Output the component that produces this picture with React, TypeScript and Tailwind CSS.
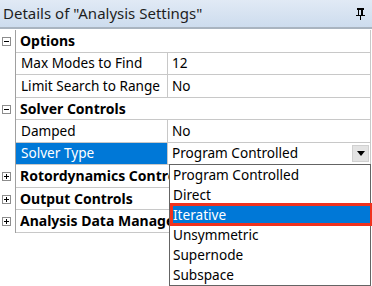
import React from 'react';

type Row =
  | { kind: 'group'; label: string; open: boolean; h: string }
  | { kind: 'prop'; label: string; value: string; h: string; selected?: boolean };

const rows: Row[] = [
  { kind: 'group', label: 'Options', open: true, h: 'h-[23px]' },
  { kind: 'prop', label: 'Max Modes to Find', value: '12', h: 'h-[22px]' },
  { kind: 'prop', label: 'Limit Search to Range', value: 'No', h: 'h-[23px]' },
  { kind: 'group', label: 'Solver Controls', open: true, h: 'h-[22px]' },
  { kind: 'prop', label: 'Damped', value: 'No', h: 'h-[23px]' },
  { kind: 'prop', label: 'Solver Type', value: 'Program Controlled', h: 'h-[22px]', selected: true },
  { kind: 'group', label: 'Rotordynamics Controls', open: false, h: 'h-[23px]' },
  { kind: 'group', label: 'Output Controls', open: false, h: 'h-[22px]' },
  { kind: 'group', label: 'Analysis Data Management', open: false, h: 'h-[23px]' },
];

const options = ['Program Controlled', 'Direct', 'Iterative', 'Unsymmetric', 'Supernode', 'Subspace'];

const ToggleBox = ({ open }: { open: boolean }) => (
  <div className="w-[9px] h-[9px] border border-[#8c8c8c] bg-white flex items-center justify-center relative">
    <div className="w-[5px] h-[1px] bg-black" />
    {!open && <div className="absolute w-[1px] h-[5px] bg-black" />}
  </div>
);

const PinIcon = () => (
  <svg width="9" height="12" viewBox="0 0 9 12" className="block">
    <rect x="1" y="0" width="7" height="2" fill="#000" />
    <rect x="2" y="2" width="1" height="5" fill="#000" />
    <rect x="5" y="2" width="2" height="5" fill="#000" />
    <rect x="0" y="7" width="9" height="1" fill="#000" />
    <rect x="4" y="8" width="1" height="4" fill="#000" />
  </svg>
);

export default function App() {
  return (
    <div
      className="relative w-[372px] h-[286px] bg-white overflow-hidden text-[13.6px] text-black"
      style={{ fontFamily: '"Noto Sans", sans-serif' }}
    >
      {/* title bar */}
      <div className="h-[29px] bg-gradient-to-b from-[#e1eaf5] to-[#cddcee] border-b-2 border-[#a9b4c0] flex items-center justify-between pl-[3px] pr-[7px]">
        <span className="text-[15px] text-[#1e1e1e] leading-none">Details of "Analysis Settings"</span>
        <PinIcon />
      </div>

      {/* property grid */}
      <div className="mt-[1px] w-[371px]">
        {rows.map((r, i) => (
          <div key={i} className={`flex ${r.h}`}>
            <div className="w-[16px] shrink-0 border-r border-[#a0a0a0] flex items-center justify-center pr-[3px]">
              {r.kind === 'group' && <ToggleBox open={r.open} />}
            </div>
            {r.kind === 'group' ? (
              <div className="flex-1 flex items-center pl-[4px] text-[14px] font-bold border-b border-r border-[#c8c8c8] whitespace-nowrap">
                {/* labels under the open list get cut at its edge */}
                <span className="block max-w-[149px] overflow-hidden leading-[18px]">{r.label}</span>
              </div>
            ) : (
              <>
                <div
                  className={`w-[152px] shrink-0 flex items-center pl-[5px] border-b border-r border-[#c8c8c8] whitespace-nowrap ${
                    r.selected ? 'bg-[#0078d7] text-white' : ''
                  }`}
                >
                  {r.label}
                </div>
                <div className="flex-1 flex items-center pl-[4px] border-b border-r border-[#c8c8c8] whitespace-nowrap relative">
                  {r.value}
                  {r.selected && (
                    <div className="absolute right-[1px] top-[2px] w-[17px] h-[17px] bg-[#e3e3e3] border border-[#d0d0d0] flex items-center justify-center">
                      <div className="w-0 h-0 border-l-[4px] border-r-[4px] border-t-[5px] border-l-transparent border-r-transparent border-t-black" />
                    </div>
                  )}
                </div>
              </>
            )}
          </div>
        ))}
      </div>

      {/* dropdown list */}
      <div className="absolute left-[169px] top-[164px] w-[202px] bg-white border border-[#646464]">
        {options.map((o) => (
          <div
            key={o}
            className={`h-[20px] flex items-center pl-[3px] whitespace-nowrap leading-[18px] ${
              o === 'Iterative' ? 'bg-[#0078d7] text-white' : ''
            }`}
          >
            {o}
          </div>
        ))}
      </div>
      <div className="absolute left-[170px] top-[203px] w-[203px] h-[23px] border-[3px] border-[#f0321e]" />
    </div>
  );
}
